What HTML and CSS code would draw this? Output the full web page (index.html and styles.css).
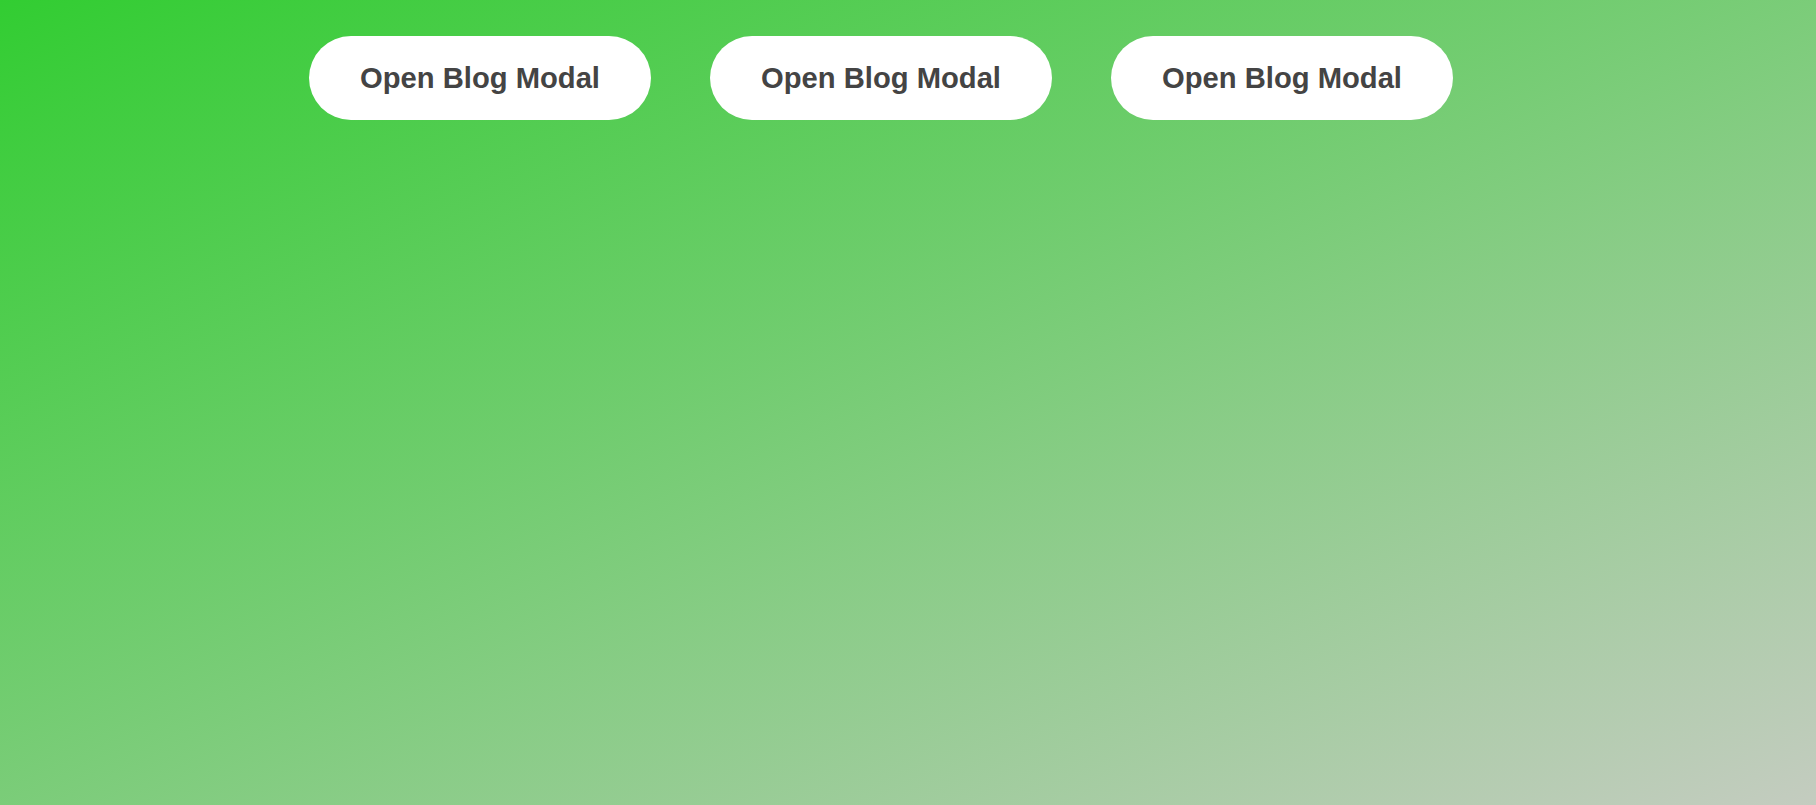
FILE: index.html
```html
<!DOCTYPE html>
<html lang="en">
<head>
<meta charset="utf-8">
<title>Blog Modals</title>
<link rel="stylesheet" href="styles.css">
</head>
<body>
<div class="bar">
  <button class="open-btn">Open Blog Modal</button>
  <button class="open-btn">Open Blog Modal</button>
  <button class="open-btn">Open Blog Modal</button>
</div>
</body>
</html>
```
FILE: styles.css
```css
html, body {
  margin: 0;
  height: 100%;
}
body {
  background: linear-gradient(to bottom right, #32cd32 0%, #c4ccc0 100%);
  font-family: "Liberation Sans", Arial, sans-serif;
  overflow: hidden;
}
.bar {
  display: flex;
  gap: 59px;
  padding: 36px 0 0 309px;
}
.open-btn {
  width: 342px;
  height: 84px;
  border: none;
  border-radius: 42px;
  background: #ffffff;
  color: #444444;
  font-family: "Liberation Sans", Arial, sans-serif;
  font-weight: bold;
  font-size: 29.2px;
  padding: 0;
  cursor: pointer;
}
```
